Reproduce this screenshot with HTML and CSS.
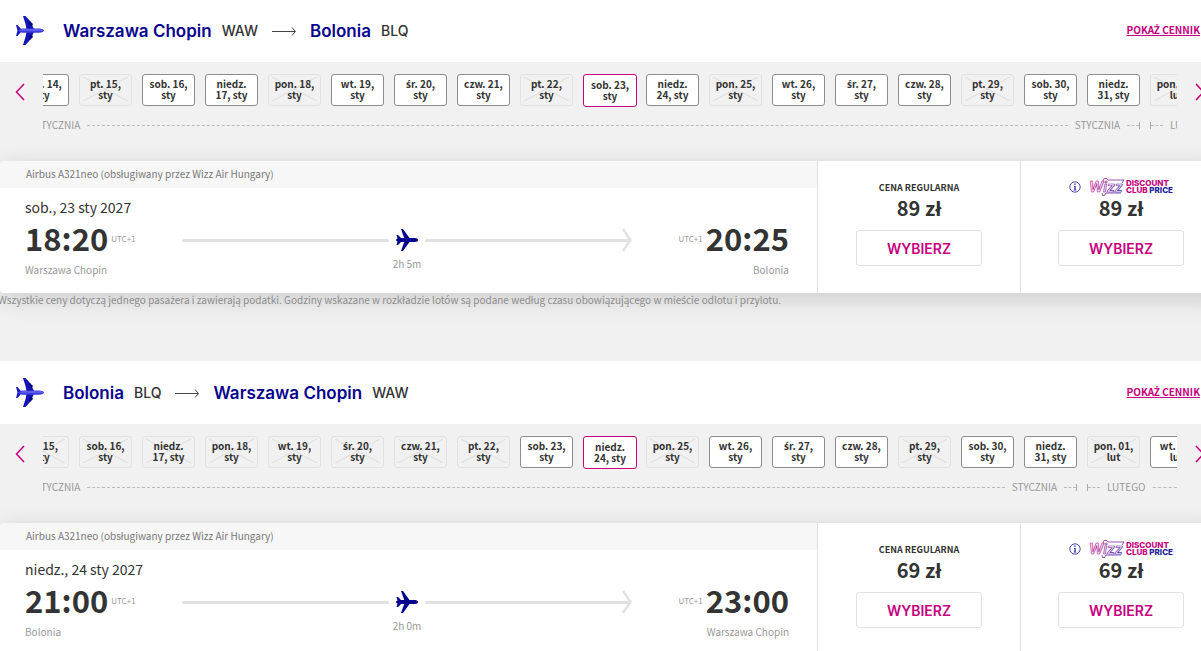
FILE: index.html
```html
<!DOCTYPE html>
<html lang="pl">
<head>
  <meta charset="UTF-8">
  <meta name="viewport" content="width=device-width, initial-scale=1.0">
  <title>Wybór lotu</title>
  <link rel="stylesheet" href="styles.css">
</head>
<body>

  <!-- shared icons -->
  <svg class="sprite" aria-hidden="true">
    <defs>
      <linearGradient id="wizzGradient" gradientUnits="userSpaceOnUse" x1="0" y1="0" x2="30" y2="22">
        <stop offset="0" stop-color="#e0188c"/>
        <stop offset="1" stop-color="#3c2fb0"/>
      </linearGradient>
    </defs>
    <symbol id="plane-big" viewBox="0 0 28 29">
      <path fill="#1414b4" d="M7 0h2.500l4.500 5 4 8h-7.500L9.500 8z"/>
      <path fill="#1414b4" d="M7 29h2.500l4.500-5 4-8h-7.500l-1 5z"/>
      <path fill="#07077c" d="M13 5.500l1-.5 3 3-1 2-2-.5zM13 23.500l1 .5 3-3-1-2-2 .5z"/>
      <path fill="#1a1ab8" d="M0 9h1.500L5 13v3l-3.500 4H0l1.500-5.500z"/>
      <path fill="#3b3be0" d="M1 14.500l5-2h17c3 0 5 1 5 2s-2 2.200-5 2.200H6z"/>
      <path fill="#7b7bf5" d="M6 13.500h17c2 0 4 .4 4.500 1H4z"/>
    </symbol>
    <symbol id="plane" viewBox="0 0 22 22">
      <path fill="#06038d" d="M5 0h2l6.500 9H19c2 0 3 1 3 2s-1 2-3 2h-5.500L7 22H5l3.200-9H5l-3 3H.5l1-3.500L0 11.500v-1l1.500-1L.5 6H2l3 3h3.200z"/>
    </symbol>
    <symbol id="route-arrow" viewBox="0 0 24 10">
      <path fill="none" stroke="#444" d="M0 5.500h23M20 1.500l3.500 4-3.500 4"/>
    </symbol>
    <symbol id="prev" viewBox="0 0 10 18">
      <path fill="none" stroke="#c6007e" stroke-width="1.500" d="M9 1L1.500 9 9 17"/>
    </symbol>
    <symbol id="next" viewBox="0 0 10 18">
      <path fill="none" stroke="#c6007e" stroke-width="1.500" d="M1 1l7.500 8L1 17"/>
    </symbol>
    <symbol id="link-arrow" viewBox="0 0 12 8">
      <path fill="none" stroke="#c6007e" d="M1 4h10M8 1l3 3-3 3"/>
    </symbol>
    <symbol id="arrow-end" viewBox="0 0 10 24">
      <path fill="none" stroke="#e1e1e1" stroke-width="2.500" d="M1 1l7.500 11L1 23"/>
    </symbol>
    <symbol id="info" viewBox="0 0 12 12">
      <circle cx="6" cy="6" r="5.200" fill="none" stroke="#1c1c9c" stroke-width=".8"/>
      <path fill="#1c1c9c" d="M5.300 2.500h1.300v1.300H5.300zM5 5h1.600v3.700h.7v.7H4.800v-.7h.6v-3H5z"/>
    </symbol>
    <symbol id="wizz" viewBox="0 0 36 18">
      <text x="0" y="14" class="wizz-word">Wizz</text>
      <path fill="none" stroke="url(#wizzGradient)" stroke-width=".8" d="M14 3l1-2.500h3l1 1.500h16l-2 3M32 15H17l-1.500 2.500h-2L13 15"/>
    </symbol>
  </svg>

  <main class="flights">

    <section class="flight">
      <header class="route">
        <svg class="route-plane"><use href="#plane-big"/></svg>
        <h2 class="route-title">
          <span class="city">Warszawa Chopin</span>
          <span class="code">WAW</span>
          <svg class="route-arrow"><use href="#route-arrow"/></svg>
          <span class="city">Bolonia</span>
          <span class="code">BLQ</span>
        </h2>
        <a class="price-list" href="#">POKA<span class="pl">Ż</span> CENNIK</a>
        <svg class="link-arrow"><use href="#link-arrow"/></svg>
      </header>

      <div class="calendar">
        <button class="nav" aria-label="Wcześniej"><svg><use href="#prev"/></svg></button>
        <div class="calendar-view">
          <div class="days">
            <button class="day">czw. 14, sty</button>
            <button class="day" disabled>pt. 15, sty</button>
            <button class="day">sob. 16, sty</button>
            <button class="day">niedz. 17, sty</button>
            <button class="day" disabled>pon. 18, sty</button>
            <button class="day">wt. 19, sty</button>
            <button class="day"><span class="pl">ś</span>r. 20, sty</button>
            <button class="day">czw. 21, sty</button>
            <button class="day" disabled>pt. 22, sty</button>
            <button class="day selected">sob. 23, sty</button>
            <button class="day">niedz. 24, sty</button>
            <button class="day" disabled>pon. 25, sty</button>
            <button class="day">wt. 26, sty</button>
            <button class="day"><span class="pl">ś</span>r. 27, sty</button>
            <button class="day">czw. 28, sty</button>
            <button class="day" disabled>pt. 29, sty</button>
            <button class="day">sob. 30, sty</button>
            <button class="day">niedz. 31, sty</button>
            <button class="day" disabled>pon. 01, lut</button>
          </div>
          <div class="months">
            <div class="month">
              <span class="cut">STYCZNIA</span>
              <i class="dash"></i>
              <span>STYCZNIA</span>
              <i class="dash end"></i>
            </div>
            <div class="month next-month" style="width: 27px">
              <i class="dash start"></i>
              <span>LUTEGO</span>
              <i class="dash"></i>
            </div>
          </div>
        </div>
        <button class="nav" aria-label="Później"><svg><use href="#next"/></svg></button>
      </div>

      <article class="card">
        <div class="details">
          <p class="aircraft">Airbus A321neo (obsługiwany przez Wizz Air Hungary)</p>
          <div class="trip">
            <p class="date">sob., 23 sty 2027</p>
            <div class="times">
              <div class="stop">
                <p class="clock"><time>18:20</time><small>UTC+1</small></p>
                <p class="place">Warszawa Chopin</p>
              </div>
              <div class="path">
                <div class="path-line">
                  <i class="line"></i>
                  <svg class="plane"><use href="#plane"/></svg>
                  <i class="line"></i>
                  <svg class="arrow-end"><use href="#arrow-end"/></svg>
                </div>
                <p class="duration">2h 5m</p>
              </div>
              <div class="stop arrival">
                <p class="clock"><small>UTC+1</small><time>20:25</time></p>
                <p class="place">Bolonia</p>
              </div>
            </div>
          </div>
        </div>
        <div class="fare">
          <p class="fare-name">CENA REGULARNA</p>
          <p class="price">89 zł</p>
          <button class="choose">WYBIERZ</button>
        </div>
        <div class="fare club">
          <div class="fare-name">
            <svg class="info"><use href="#info"/></svg>
            <svg class="wizz"><use href="#wizz"/></svg>
            <p class="club-text">DISCOUNT<br>CLUB <b>PRICE</b></p>
          </div>
          <p class="price">89 zł</p>
          <button class="choose">WYBIERZ</button>
        </div>
      </article>
      <p class="note">Wszystkie ceny dotyczą jednego pasa<span class="pl">ż</span>era i zawierają podatki. Godziny wskazane w rozkładzie lotów są podane według czasu obowiązującego w mie<span class="pl">ś</span>cie odlotu i przylotu.</p>
    </section>

    <section class="flight">
      <header class="route">
        <svg class="route-plane"><use href="#plane-big"/></svg>
        <h2 class="route-title">
          <span class="city">Bolonia</span>
          <span class="code">BLQ</span>
          <svg class="route-arrow"><use href="#route-arrow"/></svg>
          <span class="city">Warszawa Chopin</span>
          <span class="code">WAW</span>
        </h2>
        <a class="price-list" href="#">POKA<span class="pl">Ż</span> CENNIK</a>
        <svg class="link-arrow"><use href="#link-arrow"/></svg>
      </header>

      <div class="calendar">
        <button class="nav" aria-label="Wcześniej"><svg><use href="#prev"/></svg></button>
        <div class="calendar-view">
          <div class="days">
            <button class="day" disabled>pt. 15, sty</button>
            <button class="day" disabled>sob. 16, sty</button>
            <button class="day" disabled>niedz. 17, sty</button>
            <button class="day" disabled>pon. 18, sty</button>
            <button class="day" disabled>wt. 19, sty</button>
            <button class="day" disabled><span class="pl">ś</span>r. 20, sty</button>
            <button class="day" disabled>czw. 21, sty</button>
            <button class="day" disabled>pt. 22, sty</button>
            <button class="day">sob. 23, sty</button>
            <button class="day selected">niedz. 24, sty</button>
            <button class="day" disabled>pon. 25, sty</button>
            <button class="day">wt. 26, sty</button>
            <button class="day"><span class="pl">ś</span>r. 27, sty</button>
            <button class="day">czw. 28, sty</button>
            <button class="day" disabled>pt. 29, sty</button>
            <button class="day">sob. 30, sty</button>
            <button class="day">niedz. 31, sty</button>
            <button class="day" disabled>pon. 01, lut</button>
            <button class="day">wt. 02, lut</button>
          </div>
          <div class="months">
            <div class="month">
              <span class="cut">STYCZNIA</span>
              <i class="dash"></i>
              <span>STYCZNIA</span>
              <i class="dash end"></i>
            </div>
            <div class="month next-month" style="width: 90px">
              <i class="dash start"></i>
              <span>LUTEGO</span>
              <i class="dash"></i>
            </div>
          </div>
        </div>
        <button class="nav" aria-label="Później"><svg><use href="#next"/></svg></button>
      </div>

      <article class="card">
        <div class="details">
          <p class="aircraft">Airbus A321neo (obsługiwany przez Wizz Air Hungary)</p>
          <div class="trip">
            <p class="date">niedz., 24 sty 2027</p>
            <div class="times">
              <div class="stop">
                <p class="clock"><time>21:00</time><small>UTC+1</small></p>
                <p class="place">Bolonia</p>
              </div>
              <div class="path">
                <div class="path-line">
                  <i class="line"></i>
                  <svg class="plane"><use href="#plane"/></svg>
                  <i class="line"></i>
                  <svg class="arrow-end"><use href="#arrow-end"/></svg>
                </div>
                <p class="duration">2h 0m</p>
              </div>
              <div class="stop arrival">
                <p class="clock"><small>UTC+1</small><time>23:00</time></p>
                <p class="place">Warszawa Chopin</p>
              </div>
            </div>
          </div>
        </div>
        <div class="fare">
          <p class="fare-name">CENA REGULARNA</p>
          <p class="price">69 zł</p>
          <button class="choose">WYBIERZ</button>
        </div>
        <div class="fare club">
          <div class="fare-name">
            <svg class="info"><use href="#info"/></svg>
            <svg class="wizz"><use href="#wizz"/></svg>
            <p class="club-text">DISCOUNT<br>CLUB <b>PRICE</b></p>
          </div>
          <p class="price">69 zł</p>
          <button class="choose">WYBIERZ</button>
        </div>
      </article>
    </section>

  </main>

</body>
</html>
```
FILE: styles.css
```css
* {
  box-sizing: border-box;
}

body {
  margin: 0;
  background: #f1f1f1;
  color: #333;
  font-family: "Noto Sans CJK SC", "Noto Sans", sans-serif;
  overflow: hidden;
}

p, h2 {
  margin: 0;
}

button {
  font-family: inherit;
  cursor: pointer;
}

.sprite {
  position: absolute;
  width: 0;
  height: 0;
}

/* Polish letters missing from the main font */
.pl {
  font-family: "Noto Sans", sans-serif;
  line-height: 1;
}

.flights {
  width: calc(100% + 20px);
  margin-top: -1px;
}

.flight {
  padding-bottom: 54px;
}

.flight:last-child {
  padding-bottom: 0;
}

/* Route header */
.route {
  display: flex;
  align-items: center;
  height: 63px;
  padding: 0 9px 0 16px;
  background: #fff;
}

.route-plane {
  width: 28px;
  height: 29px;
  margin-right: 19px;
}

.route-title {
  display: flex;
  align-items: center;
  flex: 1;
  gap: 10px;
  font-family: Inter, sans-serif;
  font-weight: 500;
  line-height: 24px;
}

.city {
  color: #06038d;
  font-size: 17px;
  font-weight: 600;
}

.code {
  font-size: 14px;
}

.route-arrow {
  width: 24px;
  height: 10px;
  margin: 0 4px;
}

.price-list {
  padding-bottom: 2px;
  color: #c6007e;
  font-size: 10px;
  font-weight: 700;
  line-height: 14px;
}

.link-arrow {
  width: 12px;
  height: 8px;
}

/* Calendar */
.calendar {
  display: flex;
  align-items: flex-start;
  height: 99px;
  padding: 12px 16px 0 15px;
}

.nav {
  width: 28px;
  height: 34px;
  padding: 0;
  border: 0;
  background: none;
  text-align: left;
}

.nav:last-child {
  text-align: right;
}

.nav svg {
  display: inline-block;
  width: 10px;
  height: 18px;
  vertical-align: middle;
}

.calendar-view {
  flex: 1;
  min-width: 0;
  overflow: hidden;
}

.days {
  display: flex;
  justify-content: center;
  align-items: flex-start;
  gap: 10px;
  height: 33px;
  padding-right: 1px;
}

.day {
  flex: 0 0 53px;
  height: 32px;
  padding: 0 4px 2px;
  border: 1px solid #8c8c8c;
  border-radius: 3px;
  background: #fff;
  color: #333;
  font-size: 10px;
  font-weight: 700;
  line-height: 11px;
}

.day:disabled {
  padding: 2px 3px 4px;
  border-color: #e1e1e1;
  background:
    linear-gradient(to top right, transparent calc(50% - 1px), #dedede, transparent calc(50% + 1px)) content-box,
    linear-gradient(to bottom right, transparent calc(50% - 1px), #dedede, transparent calc(50% + 1px)) content-box,
    #f1f1f1;
}

.day.selected {
  flex-basis: 54px;
  height: 33px;
  margin-right: -1px;
  border-color: #c6007e;
}

.months {
  display: flex;
  gap: 10px;
  margin-top: 11px;
  color: #999;
  font-size: 10px;
  line-height: 14px;
}

.month {
  display: flex;
  align-items: center;
  flex: 1;
  gap: 7px;
}

.month .cut {
  margin-left: -8px;
}

.next-month {
  flex: none;
  overflow: hidden;
}

.dash {
  flex: 1;
  height: 1px;
  border-top: 1px dashed #bbb;
}

.dash.start, .dash.end {
  display: flex;
  align-items: center;
  flex: 0 0 13px;
  height: 7px;
  border: 0;
}

.dash.end {
  border-right: 1px solid #aaa;
}

.dash.start {
  border-left: 1px solid #aaa;
}

.dash.start::before, .dash.end::before {
  content: "";
  flex: 1;
  border-top: 1px dashed #bbb;
}

/* Flight card */
.card {
  display: flex;
  height: 132px;
  border-radius: 4px;
  background: #fff;
  box-shadow: 0 6px 24px rgba(0, 0, 0, 0.16);
}

.details {
  flex: 1;
}

.aircraft {
  height: 27px;
  padding-left: 26px;
  border-top-left-radius: 4px;
  background: #f7f7f7;
  color: #777;
  font-size: 10px;
  line-height: 25px;
}

.trip {
  padding: 9px 28px 0 25px;
}

.date {
  font-size: 14px;
  line-height: 20px;
}

.times {
  display: flex;
  justify-content: space-between;
  padding-top: 1px;
}

.stop {
  width: 157px;
}

.arrival {
  text-align: right;
}

.clock {
  display: flex;
  align-items: center;
  height: 44px;
  font-size: 31px;
  font-weight: 700;
  line-height: 40px;
}

.clock time {
  padding-bottom: 4px;
}

.arrival .clock {
  justify-content: flex-end;
}

.clock small {
  margin: 0 3px;
  padding-bottom: 2px;
  color: #999;
  font-size: 8px;
  font-weight: 400;
}

.place, .duration {
  color: #999;
  font-size: 10px;
  line-height: 16px;
}

.path {
  flex: 1;
  text-align: center;
}

.path-line {
  display: flex;
  align-items: center;
  height: 44px;
}

.line {
  flex: 1;
  height: 3px;
  border-radius: 2px;
  background: #e1e1e1;
}

.plane {
  width: 22px;
  height: 22px;
  margin: 0 7px;
}

.arrow-end {
  width: 10px;
  height: 24px;
  margin-left: -9px;
}

.duration {
  margin-top: -6px;
}

/* Fares */
.fare {
  display: flex;
  flex-direction: column;
  align-items: center;
  width: 203px;
  padding-top: 18px;
  border-left: 1px solid #e1e1e1;
}

.fare.club {
  width: 201px;
}

.fare-name {
  display: flex;
  align-items: center;
  height: 16px;
  font-size: 9px;
  font-weight: 700;
}

.price {
  font-size: 20px;
  font-weight: 700;
  line-height: 26px;
}

.choose {
  width: 126px;
  height: 36px;
  margin-top: 9px;
  border: 1px solid #e1e1e1;
  border-radius: 3px;
  background: #fff;
  color: #c6007e;
  font-family: Inter, sans-serif;
  font-size: 14px;
  font-weight: 600;
}

.info {
  width: 12px;
  height: 12px;
  margin-right: 8px;
}

.wizz {
  width: 36px;
  height: 18px;
  margin-right: 1px;
}

.wizz-word {
  fill: none;
  stroke: url(#wizzGradient);
  stroke-width: 0.7px;
  font: italic 600 14px Inter, sans-serif;
}

.club-text {
  color: #c6007e;
  font-family: Inter, sans-serif;
  font-size: 8px;
  font-weight: 800;
  line-height: 7px;
  white-space: nowrap;
}

.club-text b {
  color: #1c1c9c;
  font-weight: 800;
}

.note {
  margin-left: -2px;
  color: #8c8c8c;
  font-size: 10px;
  line-height: 14px;
}
```
